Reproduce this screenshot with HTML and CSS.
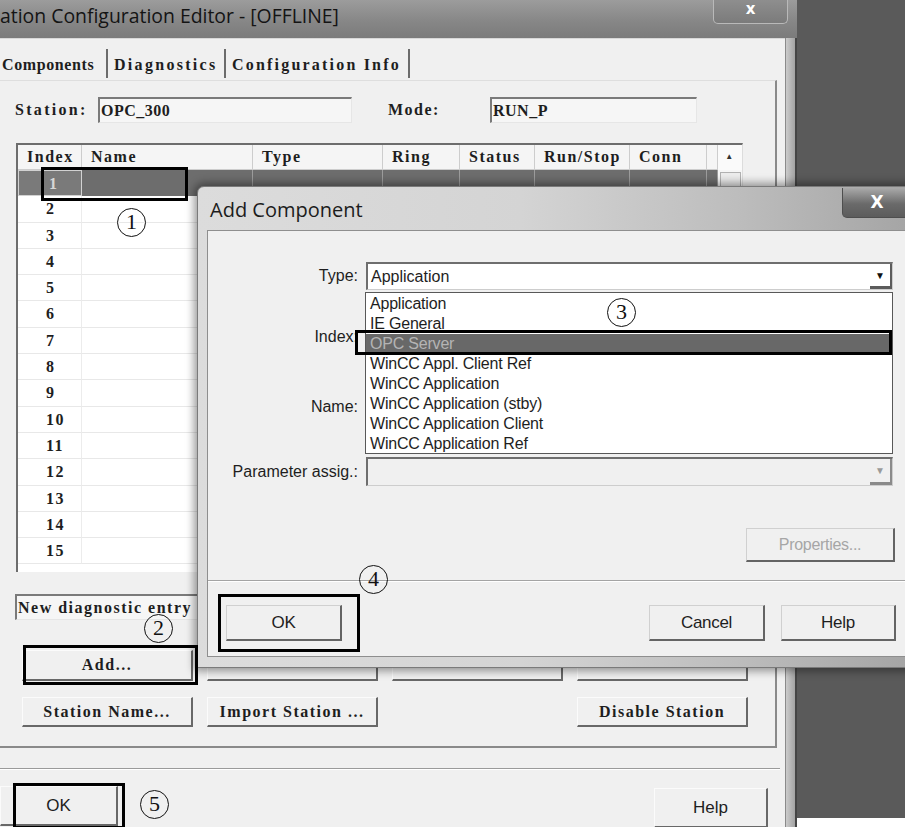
FILE: index.html
```html
<!DOCTYPE html>
<html lang="en">
<head>
  <meta charset="UTF-8" />
  <title>Station Configuration Editor</title>
  <link rel="stylesheet" href="styles.css">
</head>
<body>

<div class="screen">
  <div class="window">
    <div class="titlebar">
      <span class="title">ation Configuration Editor - [OFFLINE]</span>
      <div class="win-close">x</div>
    </div>
    <div class="window-body">
      <div class="client">
        <div class="tabs">
          <div class="tab tab-comp">Components</div>
          <div class="tab tab-diag">Diagnostics</div>
          <div class="tab tab-info">Configuration Info</div>
        </div>

        <div class="group">
          <div class="field-row">
            <span class="lbl-station">Station:</span>
            <div class="ro-input station-input">OPC_300</div>
            <span class="lbl-mode">Mode:</span>
            <div class="ro-input mode-input">RUN_P</div>
          </div>

          <div class="grid">
            <div class="grid-table">
              <div class="th">Index</div><div class="th">Name</div><div class="th">Type</div><div class="th">Ring</div><div class="th">Status</div><div class="th">Run/Stop</div><div class="th">Conn</div><div class="th"></div>
              <div class="td idx sel">1</div><div class="td sel"></div><div class="td sel"></div><div class="td sel"></div><div class="td sel"></div><div class="td sel"></div><div class="td sel"></div><div class="td sel"></div>
              <div class="td idx">2</div><div class="td"></div><div class="td"></div><div class="td"></div><div class="td"></div><div class="td"></div><div class="td"></div><div class="td"></div>
              <div class="td idx">3</div><div class="td"></div><div class="td"></div><div class="td"></div><div class="td"></div><div class="td"></div><div class="td"></div><div class="td"></div>
              <div class="td idx">4</div><div class="td"></div><div class="td"></div><div class="td"></div><div class="td"></div><div class="td"></div><div class="td"></div><div class="td"></div>
              <div class="td idx">5</div><div class="td"></div><div class="td"></div><div class="td"></div><div class="td"></div><div class="td"></div><div class="td"></div><div class="td"></div>
              <div class="td idx">6</div><div class="td"></div><div class="td"></div><div class="td"></div><div class="td"></div><div class="td"></div><div class="td"></div><div class="td"></div>
              <div class="td idx">7</div><div class="td"></div><div class="td"></div><div class="td"></div><div class="td"></div><div class="td"></div><div class="td"></div><div class="td"></div>
              <div class="td idx">8</div><div class="td"></div><div class="td"></div><div class="td"></div><div class="td"></div><div class="td"></div><div class="td"></div><div class="td"></div>
              <div class="td idx">9</div><div class="td"></div><div class="td"></div><div class="td"></div><div class="td"></div><div class="td"></div><div class="td"></div><div class="td"></div>
              <div class="td idx">10</div><div class="td"></div><div class="td"></div><div class="td"></div><div class="td"></div><div class="td"></div><div class="td"></div><div class="td"></div>
              <div class="td idx">11</div><div class="td"></div><div class="td"></div><div class="td"></div><div class="td"></div><div class="td"></div><div class="td"></div><div class="td"></div>
              <div class="td idx">12</div><div class="td"></div><div class="td"></div><div class="td"></div><div class="td"></div><div class="td"></div><div class="td"></div><div class="td"></div>
              <div class="td idx">13</div><div class="td"></div><div class="td"></div><div class="td"></div><div class="td"></div><div class="td"></div><div class="td"></div><div class="td"></div>
              <div class="td idx">14</div><div class="td"></div><div class="td"></div><div class="td"></div><div class="td"></div><div class="td"></div><div class="td"></div><div class="td"></div>
              <div class="td idx">15</div><div class="td"></div><div class="td"></div><div class="td"></div><div class="td"></div><div class="td"></div><div class="td"></div><div class="td"></div>
            </div>
            <div class="vscroll">
              <div class="sb-up">&#9650;</div>
              <div class="sb-thumb"></div>
            </div>
          </div>

          <div class="ro-input diag">New diagnostic entry</div>

          <div class="btn-row first">
            <div class="btn">Add...</div>
            <div class="btn"></div>
            <div class="btn"></div>
            <div class="btn"></div>
          </div>
          <div class="btn-row">
            <div class="btn">Station Name...</div>
            <div class="btn">Import Station ...</div>
            <div class="btn-slot"></div>
            <div class="btn">Disable Station</div>
          </div>
        </div>

        <div class="sep"></div>

        <div class="foot">
          <div class="btn btn-sans foot-ok">OK</div>
          <div class="btn btn-sans foot-help">Help</div>
        </div>
      </div>
      <div class="frame-edge"></div>
    </div>
  </div>
  <div class="desk"></div>
</div>

<!-- Add Component dialog on top of the editor -->
<div class="dialog">
  <div class="dlg-title">
    <span>Add Component</span>
    <div class="dlg-close">X</div>
  </div>
  <div class="dlg-client">
    <div class="form-row row-type">
      <label>Type:</label>
      <div class="combo">Application<span class="combo-arrow">&#9660;</span></div>
    </div>
    <div class="form-row row-index">
      <label>Index:</label>
      <div class="edit"></div>
    </div>
    <div class="form-row row-name">
      <label>Name:</label>
      <div class="edit"></div>
    </div>
    <div class="form-row row-param">
      <label>Parameter assig.:</label>
      <div class="combo disabled"><span class="combo-arrow">&#9660;</span></div>
    </div>

    <div class="dbtn props">Properties...</div>

    <div class="dlg-sep"></div>

    <div class="dlg-buttons">
      <div class="dbtn dlg-ok">OK</div>
      <div class="dbtn dlg-cancel">Cancel</div>
      <div class="dbtn dlg-help">Help</div>
    </div>

    <div class="dd-list">
      <div>Application</div>
      <div>IE General</div>
      <div class="hl">OPC Server</div>
      <div>WinCC Appl. Client Ref</div>
      <div>WinCC Application</div>
      <div>WinCC Application (stby)</div>
      <div>WinCC Application Client</div>
      <div>WinCC Application Ref</div>
    </div>
  </div>
</div>

<!-- step markers -->
<div class="mark m1"></div>
<div class="mark m2"></div>
<div class="mark m3"></div>
<div class="mark m4"></div>
<div class="mark m5"></div>

<div class="num n1">1</div>
<div class="num n2">2</div>
<div class="num n3">3</div>
<div class="num n4">4</div>
<div class="num n5">5</div>

</body>
</html>
```
FILE: styles.css
```css
* {
  box-sizing: border-box;
}

body {
  margin: 0;
  width: 905px;
  height: 827px;
  overflow: hidden;
  position: relative;
  background: #fff;
  font-family: 'Liberation Sans', Arial, sans-serif;
  color: #1e1e1e;
}

.screen {
  display: flex;
  height: 818px;
}

.window {
  width: 797px;
  display: flex;
  flex-direction: column;
}

.titlebar {
  height: 38px;
  flex: none;
  display: flex;
  align-items: flex-start;
  background: linear-gradient(#9c9c9c, #878787 55%, #7b7b7b);
}

.title {
  font-family: 'Open Sans', sans-serif;
  font-size: 19.4px;
  line-height: 32px;
  color: #141414;
  white-space: nowrap;
}

.win-close {
  margin-left: auto;
  margin-right: 9px;
  width: 75px;
  height: 24px;
  border: 1px solid #b9b9b9;
  border-top: none;
  border-radius: 0 0 5px 5px;
  background: linear-gradient(#8e8e8e, #7b7b7b);
  color: #fff;
  font: bold 15px 'DejaVu Sans', sans-serif;
  line-height: 19px;
  text-align: center;
}

.window-body {
  flex: 1;
  display: flex;
}

.client {
  width: 785px;
  background: #f0f0f0;
  display: flex;
  flex-direction: column;
  overflow: hidden;
  border-top: 1px solid #d8d8d8;
}

.frame-edge {
  width: 12px;
  background: linear-gradient(90deg, #cbcbcb, #a3a3a3);
  border-left: 1px solid #8a8a8a;
  border-right: 2px solid #454545;
}

.desk {
  flex: 1;
  background: #5a5a5a;
}

/* old system font look: serif, spaced out */
.tabs,
.group {
  font-family: 'Liberation Serif', serif;
  font-weight: bold;
  font-size: 16px;
  letter-spacing: 1.5px;
}

/* tabs */
.tabs {
  height: 41px;
  display: flex;
  align-items: flex-end;
  padding-bottom: 2px;
}

.tab {
  height: 29px;
  padding: 3px 0 0 6px;
  line-height: 26px;
  white-space: nowrap;
  border-right: 2px solid #6c6c6c;
}

.tab-comp {
  width: 108px;
  padding-left: 2px;
  letter-spacing: 0.6px;
}

.tab-diag {
  width: 118px;
  letter-spacing: 2.3px;
}

.tab-info {
  width: 184px;
  letter-spacing: 2.2px;
}

/* group box */
.group {
  width: 777px;
  height: 668px;
  flex: none;
  padding: 16px 0 0 15px;
  border-top: 1px solid #dedede;
  border-right: 2px solid #8a8a8a;
  border-bottom: 2px solid #8a8a8a;
}

.field-row {
  display: flex;
  align-items: center;
  height: 26px;
}

.lbl-station {
  width: 83px;
  letter-spacing: 2.3px;
}

.lbl-mode {
  width: 102px;
  margin-left: 36px;
}

.ro-input {
  height: 26px;
  background: #f6f6f6;
  border-top: 2px solid #7a7a7a;
  border-left: 2px solid #7a7a7a;
  border-right: 1px solid #e6e6e6;
  border-bottom: 1px solid #e6e6e6;
  padding-left: 1px;
  line-height: 23px;
  white-space: nowrap;
  overflow: hidden;
}

.station-input {
  width: 254px;
  letter-spacing: 0.5px;
}

.mode-input {
  width: 207px;
  letter-spacing: 0.5px;
}

/* component list */
.grid {
  margin: 20px 0 0 1px;
  width: 727px;
  height: 429px;
  display: flex;
  background: #fff;
  border-top: 2px solid #6d6d6d;
  border-left: 2px solid #6d6d6d;
  border-right: 1px solid #dcdcdc;
}

.grid-table {
  width: 700px;
  display: grid;
  grid-template-columns: 64px 171px 130px 77px 75px 95px 77px 11px;
  grid-template-rows: 25px;
  grid-auto-rows: 26.3px;
  align-content: start;
}

.th {
  background: #f5f5f5;
  border-right: 1px solid #cdcdcd;
  border-bottom: 1px solid #cdcdcd;
  padding-left: 9px;
  line-height: 24px;
  white-space: nowrap;
}

.td {
  border-right: 1px solid #ececec;
  border-bottom: 1px solid #e8e8e8;
}

.td.idx {
  padding-left: 28px;
  line-height: 25px;
}

.td.sel {
  background: #6d6d6d;
  border-right-color: #9c9c9c;
  border-bottom-color: #6d6d6d;
}

.td.idx.sel {
  background: #7a7a7a;
  border: 1px solid #d2d2d2;
  color: #d6d6d6;
  padding-left: 30px;
}

.vscroll {
  width: 24px;
  background: #f6f6f6;
}

.sb-up {
  height: 25px;
  font-size: 8px;
  line-height: 24px;
  text-align: center;
  color: #333;
  background: #fafafa;
}

.sb-thumb {
  height: 20px;
  margin: 2px 1px 0 2px;
  background: #ececec;
  border: 1px solid #b1b1b1;
}

.diag {
  margin-top: 22px;
  width: 365px;
}

.btn-row {
  display: flex;
  gap: 14px;
  margin: 16px 0 0 7px;
}

.btn-row.first {
  margin-top: 30px;
}

.btn-row.first .btn {
  height: 31px;
}

.btn,
.btn-slot {
  width: 171px;
  height: 30px;
}

.btn {
  background: #f0f0f0;
  border-top: 1px solid #fbfbfb;
  border-left: 1px solid #fbfbfb;
  border-right: 2px solid #686868;
  border-bottom: 2px solid #686868;
  text-align: center;
  line-height: 27px;
  white-space: nowrap;
}

.sep {
  margin-top: 20px;
  width: 780px;
  height: 2px;
  flex: none;
  border-top: 1px solid #9a9a9a;
  border-bottom: 1px solid #fff;
}

.foot {
  display: flex;
  margin-top: 16px;
}

.btn-sans {
  font-family: 'Liberation Sans', Arial, sans-serif;
  font-size: 17px;
  height: 40px;
  line-height: 37px;
}

.foot-ok {
  width: 118px;
}

.foot-help {
  margin-left: 536px;
  width: 114px;
  margin-top: 2px;
}

/* Add Component dialog */
.dialog {
  position: absolute;
  left: 197px;
  top: 186px;
  width: 720px;
  height: 482px;
  display: flex;
  flex-direction: column;
  border: 1px solid #7a7a7a;
  border-radius: 7px 7px 0 0;
  background: linear-gradient(90deg, #dcdcdc 0%, #d4d4d4 45%, #bdbdbd 75%, #a4a4a4 100%);
  box-shadow: 0 0 9px 3px rgba(0, 0, 0, 0.4);
  font-size: 16px;
}

.dlg-title {
  height: 43px;
  flex: none;
  display: flex;
  align-items: flex-start;
}

.dlg-title span {
  margin: 9px 0 0 12px;
  font-family: 'Open Sans', sans-serif;
  font-size: 20px;
  line-height: 28px;
  color: #1c1c1c;
}

.dlg-close {
  margin: 1px 4px 0 auto;
  width: 70px;
  height: 30px;
  border: 1px solid #4e4e4e;
  border-top: none;
  border-radius: 0 0 5px 5px;
  background: linear-gradient(#a9a9a9, #6a6a6a 55%, #5c5c5c);
  color: #fff;
  font: bold 17px 'DejaVu Sans', sans-serif;
  line-height: 28px;
  text-align: center;
}

.dlg-client {
  position: relative;
  margin-left: 9px;
  width: 705px;
  height: 427px;
  background: #f0f0f0;
  border: 1px solid #8e8e8e;
}

.form-row {
  display: flex;
  align-items: center;
  height: 28px;
}

.form-row label {
  width: 150px;
  margin-right: 8px;
  text-align: right;
  white-space: nowrap;
}

.row-type {
  margin-top: 31px;
}

.row-index {
  margin-top: 33px;
}

.row-name {
  margin-top: 42px;
}

.row-param {
  margin-top: 36px;
  height: 29px;
}

.combo,
.edit {
  width: 527px;
  height: 100%;
  background: #fff;
  border-top: 2px solid #6e6e6e;
  border-left: 2px solid #6e6e6e;
  border-right: 1px solid #cdcdcd;
  border-bottom: 1px solid #cdcdcd;
}

.combo {
  display: flex;
  align-items: center;
  padding-left: 3px;
}

.combo.disabled {
  background: #f0f0f0;
}

.combo-arrow {
  margin-left: auto;
  width: 22px;
  height: 100%;
  font-size: 10px;
  line-height: 24px;
  text-align: center;
  color: #111;
  border-right: 2px solid #5c5c5c;
  border-bottom: 3px solid #5c5c5c;
}

.combo.disabled .combo-arrow {
  color: #9a9a9a;
  border-color: #8a8a8a;
}

.dbtn {
  height: 36px;
  background: #f0f0f0;
  border-top: 1px solid #d0d0d0;
  border-left: 1px solid #d0d0d0;
  border-right: 2px solid #646464;
  border-bottom: 2px solid #646464;
  text-align: center;
  line-height: 33px;
  font-size: 17px;
  letter-spacing: -0.3px;
}

.props {
  margin: 42px 0 0 538px;
  width: 149px;
  height: 34px;
  line-height: 31px;
  font-size: 16px;
  color: #a6a6a6;
}

.dlg-sep {
  margin-top: 18px;
  height: 2px;
  border-top: 1px solid #a4a4a4;
  border-bottom: 1px solid #fff;
}

.dlg-buttons {
  display: flex;
  margin-top: 23px;
}

.dlg-ok {
  margin-left: 18px;
  width: 116px;
}

.dlg-cancel {
  margin-left: 307px;
  width: 116px;
}

.dlg-help {
  margin-left: 16px;
  width: 115px;
}

.dd-list {
  position: absolute;
  left: 157px;
  top: 61px;
  width: 528px;
  height: 162px;
  padding-top: 1px;
  background: #fff;
  border: 1px solid #585858;
}

.dd-list div {
  height: 20px;
  line-height: 20px;
  padding-left: 4px;
  letter-spacing: -0.2px;
  white-space: nowrap;
}

.dd-list .hl {
  background: #686868;
  color: #b4b4b4;
}

/* annotation boxes and circled step numbers */
.mark {
  position: absolute;
  border: 3px solid #000;
}

.m1 { left: 41px; top: 167px; width: 147px; height: 34px; }
.m2 { left: 23px; top: 645px; width: 175px; height: 40px; }
.m3 { left: 355px; top: 330px; width: 537px; height: 25px; }
.m4 { left: 218px; top: 594px; width: 142px; height: 58px; }
.m5 { left: 13px; top: 783px; width: 112px; height: 46px; }

.num {
  position: absolute;
  width: 29px;
  height: 29px;
  border: 1.5px solid #111;
  border-radius: 50%;
  font-family: 'Liberation Serif', serif;
  font-size: 22px;
  line-height: 26px;
  text-align: center;
  color: #111;
}

.n1 { left: 117px; top: 208px; }
.n2 { left: 144px; top: 614px; }
.n3 { left: 607px; top: 298px; }
.n4 { left: 359px; top: 565px; }
.n5 { left: 140px; top: 790px; }
```
